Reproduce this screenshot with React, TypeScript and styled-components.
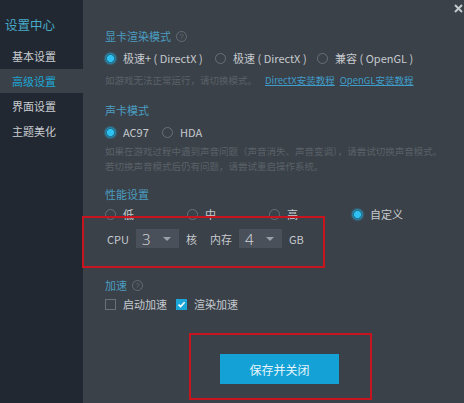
import React from 'react';
import styled, { createGlobalStyle } from 'styled-components';

const GlobalStyle = createGlobalStyle`
  html, body {
    margin: 0;
    padding: 0;
    background: #3b4148;
  }
  body {
    font-family: "Noto Sans CJK SC", "Noto Sans", sans-serif;
  }
`;

const Window = styled.div`
  display: flex;
  width: 464px;
  height: 403px;
  overflow: hidden;
  background: #3b4148;
`;

const Sidebar = styled.nav`
  width: 83px;
  flex-shrink: 0;
  background: #222831;
  display: flex;
  flex-direction: column;
  padding-top: 16px;
  box-sizing: border-box;
`;

const SideTitle = styled.div`
  color: #48aac9;
  font-size: 12.5px;
  line-height: 18px;
  padding-left: 5px;
  margin-bottom: 10px;
`;

const MenuItem = styled.div<{ $active?: boolean }>`
  height: 24px;
  line-height: 24px;
  font-size: 11px;
  padding-left: 12px;
  color: ${p => (p.$active ? '#1ba6d6' : '#c9cdd2')};
  background: ${p => (p.$active ? '#3b4148' : 'transparent')};
  margin-bottom: 1px;
`;

const Main = styled.main`
  position: relative;
  flex: 1;
  padding: 28px 0 0 22px;
  box-sizing: border-box;
  display: flex;
  flex-direction: column;
`;

const Heading = styled.div<{ $gap?: number }>`
  display: flex;
  align-items: center;
  gap: 5px;
  height: 16px;
  font-size: 11px;
  color: #4a9dc1;
  margin-top: ${p => p.$gap ?? 0}px;
`;

const Help = styled.span`
  width: 9px;
  height: 9px;
  border: 1px solid #656c74;
  border-radius: 50%;
  color: #656c74;
  font-size: 8px;
  line-height: 9px;
  text-align: center;
  font-family: "Liberation Sans", sans-serif;
`;

const OptionRow = styled.div<{ $cols: string; $gap?: number }>`
  display: grid;
  grid-template-columns: ${p => p.$cols};
  align-items: center;
  height: 20px;
  margin-top: ${p => p.$gap ?? 4}px;
`;

const Option = styled.label`
  display: flex;
  align-items: center;
  gap: 7px;
  font-size: 11px;
  color: #c6cacf;
  white-space: nowrap;
`;

const RadioDot = styled.span<{ $on?: boolean }>`
  width: 11px;
  height: 11px;
  border-radius: 50%;
  box-sizing: border-box;
  flex-shrink: 0;
  border: 1px solid ${p => (p.$on ? '#2b8fb5' : '#6a7078')};
  background: ${p => (p.$on ? 'radial-gradient(circle, #2ec2f2 0 3.2px, #1f6f8e 3.8px)' : 'transparent')};
  box-shadow: ${p => (p.$on ? '0 0 2px #2aa8d8' : 'none')};
`;

const Box = styled.span<{ $on?: boolean }>`
  width: 11px;
  height: 11px;
  box-sizing: border-box;
  flex-shrink: 0;
  border: 1px solid ${p => (p.$on ? '#1aa6d8' : '#6a7078')};
  background: ${p => (p.$on ? '#1aa6d8' : 'transparent')};
  display: flex;
  align-items: center;
  justify-content: center;
`;

const Hint = styled.div<{ $gap?: number }>`
  font-size: 9.5px;
  line-height: 15px;
  color: #5a6169;
  margin-top: ${p => p.$gap ?? 0}px;
  white-space: nowrap;
`;

const Link = styled.a<{ $gap: number }>`
  color: #3f9dca;
  text-decoration: underline;
  font-size: 9.5px;
  margin-left: ${p => p.$gap}px;
`;

const SizeRow = styled.div`
  display: flex;
  align-items: center;
  height: 19px;
  margin-top: 5px;
  padding-left: 2px;
  font-size: 11px;
  color: #c6cacf;
`;

const Unit = styled.span<{ $w: number }>`
  width: ${p => p.$w}px;
`;

const Select = styled.div`
  width: 43px;
  height: 19px;
  background: #4a5059;
  display: flex;
  align-items: center;
  justify-content: space-between;
  padding: 0 8px 0 6px;
  box-sizing: border-box;
  margin-right: 7px;
  font-size: 15px;
  font-weight: 300;
  color: #cdd1d5;
  font-family: "Noto Sans", sans-serif;
`;

const Arrow = styled.span`
  width: 0;
  height: 0;
  border-left: 4px solid transparent;
  border-right: 4px solid transparent;
  border-top: 4px solid #9aa0a7;
`;

const SaveButton = styled.button`
  width: 119px;
  height: 30px;
  margin: 40px 0 0 115px;
  border: none;
  background: #14a1d6;
  color: #e8f6fc;
  font-size: 12px;
  font-family: inherit;
`;

const Mark = styled.div<{ $l: number; $t: number; $w: number; $h: number }>`
  position: absolute;
  left: ${p => p.$l}px;
  top: ${p => p.$t}px;
  width: ${p => p.$w}px;
  height: ${p => p.$h}px;
  border: 2px solid #c8141e;
  box-sizing: border-box;
  pointer-events: none;
`;

const Close = styled.svg`
  position: absolute;
  right: 1px;
  top: 4px;
`;

const menu = ['基本设置', '高级设置', '界面设置', '主题美化'];

const Radio: React.FC<{ on?: boolean; children: React.ReactNode }> = ({ on, children }) => (
  <Option>
    <RadioDot $on={on} />
    {children}
  </Option>
);

const Check: React.FC<{ on?: boolean; children: React.ReactNode }> = ({ on, children }) => (
  <Option>
    <Box $on={on}>
      {on && (
        <svg width="9" height="9" viewBox="0 0 9 9">
          <path d="M1.5 4.6 L3.6 6.6 L7.6 2.2" stroke="#fff" strokeWidth="1.5" fill="none" />
        </svg>
      )}
    </Box>
    {children}
  </Option>
);

const App: React.FC = () => (
  <>
    <GlobalStyle />
    <Window>
      <Sidebar>
        <SideTitle>设置中心</SideTitle>
        {menu.map((m, i) => (
          <MenuItem key={m} $active={i === 1}>{m}</MenuItem>
        ))}
      </Sidebar>
      <Main>
        <Close width="9" height="9" viewBox="0 0 9 9">
          <path d="M1 1 L8 8 M8 1 L1 8" stroke="#c4c9ce" strokeWidth="2" />
        </Close>

        <Heading>显卡渲染模式 <Help>?</Help></Heading>
        <OptionRow $cols="110px 102px auto">
          <Radio on>极速+ ( DirectX )</Radio>
          <Radio>极速 ( DirectX )</Radio>
          <Radio>兼容 ( OpenGL )</Radio>
        </OptionRow>
        <Hint $gap={5}>
          如游戏无法正常运行，请切换模式。
          <Link $gap={8}>DirectX安装教程</Link>
          <Link $gap={5}>OpenGL安装教程</Link>
        </Hint>

        <Heading $gap={14}>声卡模式</Heading>
        <OptionRow $cols="57px auto">
          <Radio on>AC97</Radio>
          <Radio>HDA</Radio>
        </OptionRow>
        <Hint $gap={2}>如果在游戏过程中遇到声音问题（声音消失、声音变调），请尝试切换声音模式。</Hint>
        <Hint>若切换声音模式后仍有问题，请尝试重启操作系统。</Hint>

        <Heading $gap={12}>性能设置</Heading>
        <OptionRow $cols="82px 82px 83px auto" $gap={2}>
          <Radio>低</Radio>
          <Radio>中</Radio>
          <Radio>高</Radio>
          <Radio on>自定义</Radio>
        </OptionRow>
        <SizeRow>
          <Unit $w={29}>CPU</Unit>
          <Select>3<Arrow /></Select>
          <Unit $w={24}>核</Unit>
          <Unit $w={29}>内存</Unit>
          <Select>4<Arrow /></Select>
          <span>GB</span>
        </SizeRow>

        <Heading $gap={29}>加速 <Help>?</Help></Heading>
        <OptionRow $cols="71px auto" $gap={1}>
          <Check>启动加速</Check>
          <Check on>渲染加速</Check>
        </OptionRow>

        <div>
          <SaveButton>保存并关闭</SaveButton>
        </div>

        <Mark $l={-1} $t={216} $w={243} $h={52} />
        <Mark $l={106} $t={333} $w={183} $h={67} />
      </Main>
    </Window>
  </>
);

export default App;
